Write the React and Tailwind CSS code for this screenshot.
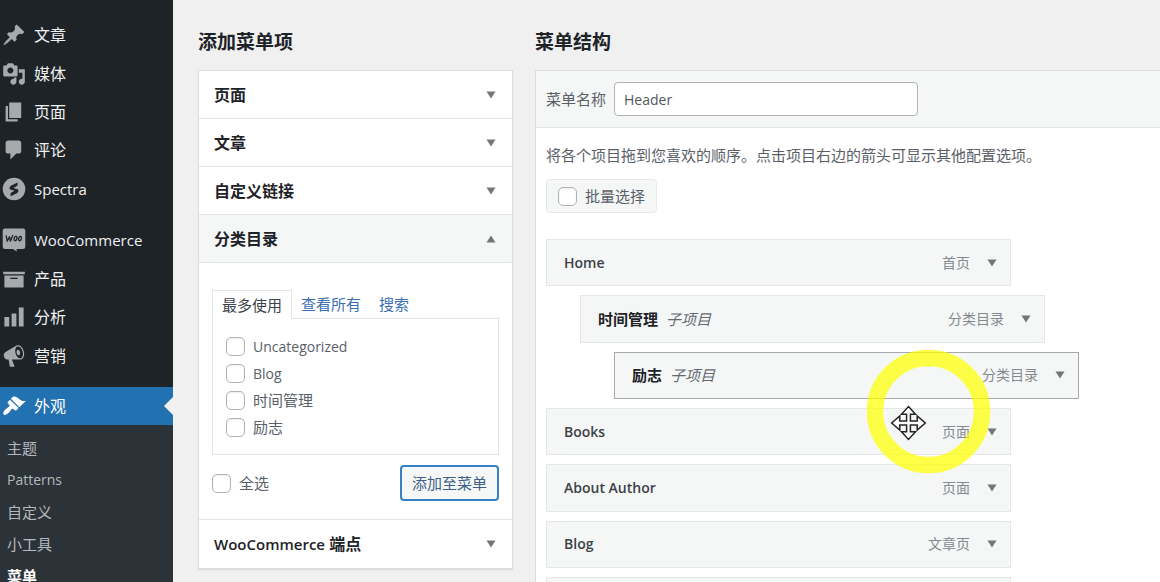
const FONT = "font-['Open_Sans','Noto_Sans_CJK_SC',sans-serif]";

const ICONS = {
  pin: "M10.44 3.02l1.82-1.82 6.36 6.35-1.83 1.82c-1.05-.68-2.48-.57-3.41.36l-.75.75c-.92.93-1.04 2.35-.35 3.41l-1.83 1.82-2.41-2.41-2.8 2.79c-.42.42-3.38 2.71-3.8 2.29s1.86-3.39 2.28-3.81l2.79-2.79L4.1 9.36l1.83-1.82c1.05.69 2.48.57 3.4-.36l.75-.75c.93-.92 1.05-2.35.36-3.41z",
  media: "M13 11V4c0-.55-.45-1-1-1h-1.67L9 1H5L3.67 3H2c-.55 0-1 .45-1 1v7c0 .55.45 1 1 1h10c.55 0 1-.45 1-1zM7 4.5c1.38 0 2.5 1.12 2.5 2.5S8.38 9.5 7 9.5 4.5 8.38 4.5 7 5.62 4.5 7 4.5zM14 6h5v10.5c0 1.38-1.12 2.5-2.5 2.5S14 17.88 14 16.5s1.12-2.5 2.5-2.5c.17 0 .34.02.5.05V9h-3V6zm-4 8.05V13h2v3.5c0 1.38-1.12 2.5-2.5 2.5S7 17.88 7 16.5 8.12 14 9.5 14c.17 0 .34.02.5.05z",
  page: "M6 15V2h10v13H6zm-1 1h8v2H3V5h2v11z",
  comment: "M5 2h9c1.1 0 2 .9 2 2v7c0 1.1-.9 2-2 2h-2l-5 5v-5H5c-1.1 0-2-.9-2-2V4c0-1.1.9-2 2-2z",
  archive: "M19 4v2H1V4h18zM2 7h16v10H2V7zm11 3V9H7v1h6z",
  chart: "M18 18V2h-4v16h4zm-6 0V7H8v11h4zm-6 0v-8H2v8h4z",
  megaphone: "M18.15 5.94c.46 1.62.38 3.22-.02 4.48-.42 1.28-1.26 2.18-2.3 2.48-.16.06-.26.06-.4.06-.06.02-.12.02-.18.02-.06.02-.14.02-.22.02h-6.8l2.22 5.5c.02.14-.06.26-.14.34-.08.1-.24.16-.34.16H6.95c-.1 0-.26-.06-.34-.16-.08-.08-.16-.2-.14-.34l-1-5.5H4.25l-.02-.02c-.5.06-1.08-.18-1.54-.62s-.88-1.08-1.06-1.88c-.24-.8-.2-1.56-.02-2.2.18-.62.58-1.08 1.06-1.3l.02-.02 9-5.4c.1-.06.18-.1.24-.16.06-.04.14-.08.24-.12.16-.08.28-.12.5-.18 1.04-.3 2.24.1 3.22.98s1.84 2.24 2.26 3.86zm-2.58 5.98h-.02c.4-.1.74-.34 1.04-.7.58-.7.86-1.76.86-3.04 0-.64-.1-1.3-.28-1.98-.34-1.36-1.02-2.5-1.78-3.24s-1.68-1.1-2.46-.88c-.82.22-1.4.96-1.7 2-.32 1.04-.28 2.36.06 3.72.38 1.36 1 2.5 1.8 3.24.78.74 1.62 1.1 2.48.88zm-2.54-7.08c.22-.04.42-.02.62.04.38.16.76.48 1.02 1s.42 1.2.42 1.78c0 .3-.04.56-.12.8-.18.48-.44.84-.86.94-.34.1-.8-.06-1.14-.4s-.64-.86-.78-1.5c-.18-.62-.12-1.24.02-1.72s.48-.84.82-.94z",
  brush: "M14.48 11.06L7.41 3.99l1.5-1.5c.5-.56 2.3-.47 3.51.32 1.21.8 1.43 1.28 2.91 2.1 1.18.64 2.45 1.26 4.45.85zm-.71.71L6.7 4.7 4.93 6.47c-.39.39-.39 1.02 0 1.41l1.06 1.06c.39.39.39 1.03 0 1.42-.6.6-1.43 1.11-2.21 1.69-.35.26-.7.53-1.01.84C1.43 14.23.4 16.08 1.4 17.07c.99 1 2.84-.03 4.18-1.36.31-.31.58-.66.85-1.02.57-.78 1.08-1.61 1.69-2.21.39-.39 1.02-.39 1.41 0l1.06 1.06c.39.39 1.02.39 1.41 0z",
};

function Icon({ name }) {
  if (name === "spectra") {
    return (
      <svg viewBox="0 0 24 24" className="size-6 shrink-0" aria-hidden="true">
        <circle cx="12" cy="12" r="11.3" fill="#a7aaad" />
        <path d="M15.6 5.4v3.2l-4.3 2.3 4.9 1.6c.4 1.6-.1 2.9-1.3 3.7L8.6 19.2v-3.2l4-2.2-4.8-1.5c-.5-1.5 0-2.9 1.2-3.6z" fill="#1d2327" />
      </svg>
    );
  }
  if (name === "woo") {
    return (
      <svg viewBox="0 0 24 24" className="size-6 shrink-0" aria-hidden="true">
        <path d="M3 .5h18a2.3 2.3 0 0 1 2.3 2.3v16a2.3 2.3 0 0 1-2.3 2.3h-6.500l.4 2.300-3.900-2.300H3A2.300 2.300 0 0 1 .7 18.800v-16A2.300 2.300 0 0 1 3 .5z" fill="#a7aaad" />
        <g fill="none" stroke="#1d2327" strokeWidth="1.300" strokeLinejoin="round" strokeLinecap="round">
          <path d="M4.200 7.800l1 5.400 2.300-4.400.9 4.400L10.700 7.600" />
          <ellipse cx="13.500" cy="10.600" rx="1.300" ry="2.200" transform="rotate(16 13.500 10.600)" />
          <ellipse cx="18" cy="10.600" rx="1.300" ry="2.200" transform="rotate(16 18 10.600)" />
        </g>
      </svg>
    );
  }
  return (
    <svg viewBox="0 0 20 20" className="size-6 shrink-0" fill="currentColor" aria-hidden="true">
      <path d={ICONS[name]} />
    </svg>
  );
}

function NavGroup({ items, className }) {
  return (
    <ul className={`flex flex-col ${className}`}>
      {items.map(([icon, label]) => (
        <li key={label} className="flex flex-1">
          <a href="#" className="flex flex-1 items-center gap-2 pl-[2px] text-[#a7aaad]">
            <Icon name={icon} />
            <span className={`text-[#f0f0f1] ${/^[A-Z]/.test(label) ? "text-[15px]" : ""}`}>{label}</span>
          </a>
        </li>
      ))}
    </ul>
  );
}

function Sidebar() {
  return (
    <nav className="w-[173px] shrink-0 bg-[#1d2327] pt-4 text-base leading-5">
      <NavGroup
        className="h-[192px]"
        items={[["pin", "文章"], ["media", "媒体"], ["page", "页面"], ["comment", "评论"], ["spectra", "Spectra"]]}
      />
      <NavGroup
        className="mt-[13px] h-[154px]"
        items={[["woo", "WooCommerce"], ["archive", "产品"], ["chart", "分析"], ["megaphone", "营销"]]}
      />
      <a href="#" className="relative mt-3 flex h-[38px] items-center gap-2 bg-[#2271b1] pl-[2px] text-white">
        <Icon name="brush" />
        外观
        <span className="absolute top-[10px] right-0 border-y-[9px] border-r-[9px] border-y-transparent border-r-[#f0f0f1]" />
      </a>
      <ul className="bg-[#2c3338] py-[7px] text-[15px] text-[#b4b9be]">
        {["主题", "Patterns", "自定义", "小工具"].map((t) => (
          <li key={t}>
            <a href="#" className={`flex h-8 items-center pl-[7px] ${t === "Patterns" ? "text-sm" : ""}`}>{t}</a>
          </li>
        ))}
        <li>
          <a href="#" className="flex h-8 items-center pl-[7px] font-bold text-white">菜单</a>
        </li>
      </ul>
    </nav>
  );
}

function Triangle({ up }) {
  return (
    <svg viewBox="0 0 10 8" className="h-2 w-[10px] shrink-0" fill="#72777c" aria-hidden="true">
      <path d={up ? "M5 .5L9.5 7.5h-9z" : "M5 7.5L.5 .5h9z"} />
    </svg>
  );
}

function Check({ label, small, className = "" }) {
  return (
    <label className={`flex items-center gap-2 ${className}`}>
      <input
        type="checkbox"
        className="size-[19px] shrink-0 appearance-none rounded-[5px] border border-[#b0b3b6] bg-white shadow-[inset_0_1px_2px_rgba(0,0,0,0.08)]"
      />
      <span className={small ? "text-sm" : ""}>{label}</span>
    </label>
  );
}

function Section({ title, open }) {
  return (
    <button
      type="button"
      aria-expanded={!!open}
      className={`flex h-12 w-full items-center justify-between pr-4 pl-[15px] text-left text-base font-semibold text-[#1d2327] ${open ? "bg-[#f5f7f7]" : ""}`}
    >
      <span>{title}</span>
      <Triangle up={open} />
    </button>
  );
}

function AddItems() {
  return (
    <section className="w-[315px] shrink-0">
      <h2 className="text-[19px] leading-7 font-semibold text-[#1d2327]">添加菜单项</h2>
      <div className="mt-[14px] divide-y divide-[#e2e4e5] border border-[#dcdddf] bg-white shadow-[0_1px_1px_rgba(0,0,0,0.08)]">
        <Section title="页面" />
        <Section title="文章" />
        <Section title="自定义链接" />
        <Section title="分类目录" open />
        <div className="px-[13px] pt-[27px] pb-[18px]">
          <div className="flex leading-[27px]">
            <button type="button" className="relative z-10 -mb-px border border-b-0 border-[#e3e4e5] bg-white px-[9px] text-[#3c434a]">
              最多使用
            </button>
            <a href="#" className="pt-px pl-[9px] text-[#3a6fb0]">查看所有</a>
            <a href="#" className="pt-px pl-[18px] text-[#3a6fb0]">搜索</a>
          </div>
          <div className="flex flex-col border border-[#e3e4e5] px-[13px] pt-[14px] pb-[14px]">
            <Check className="h-[27px]" small label="Uncategorized" />
            <Check className="h-[27px]" small label="Blog" />
            <Check className="h-[27px]" label="时间管理" />
            <Check className="h-[26px]" label="励志" />
          </div>
          <div className="mt-[10px] flex items-center justify-between">
            <Check label="全选" />
            <button
              type="button"
              className="h-9 rounded-[4px] border-2 border-[#3582c4] bg-[#f6f7f7] px-[10px] text-[#3d5f88]"
            >
              添加至菜单
            </button>
          </div>
        </div>
        <Section title={<><span className="text-[15px]">WooCommerce</span> 端点</>} />
      </div>
    </section>
  );
}

const MENU = [
  { title: "Home", type: "首页" },
  { title: "时间管理", type: "分类目录", depth: 1 },
  { title: "励志", type: "分类目录", depth: 2, active: true },
  { title: "Books", type: "页面" },
  { title: "About Author", type: "页面" },
  { title: "Blog", type: "文章页" },
];
const INDENT = ["", "ml-[34px]", "ml-[68px]"];

function MenuItem({ title, type, depth = 0, active }) {
  return (
    <li className="pb-[9px]">
      <div
        className={`flex h-full w-[465px] items-center border bg-[#f5f7f7] pr-[13px] pl-[17px] ${INDENT[depth]} ${active ? "border-[#a7aaad]" : "border-[#e4e6e7]"}`}
      >
        <span className={depth ? "font-bold text-[#1d2327]" : "text-sm font-semibold text-[#3c4146]"}>{title}</span>
        {depth > 0 && <span className="ml-2 text-[#646970] italic">子项目</span>}
        <span className="ml-auto text-sm text-[#84888d]">{type}</span>
        <button type="button" aria-label={`编辑 ${title}`} className="ml-[17px] flex">
          <Triangle />
        </button>
      </div>
    </li>
  );
}

function Structure() {
  return (
    <section className="min-w-0 flex-1">
      <h2 className="text-[19px] leading-7 font-semibold text-[#1d2327]">菜单结构</h2>
      <div className="mt-[14px] border border-r-0 border-[#dcdddf] bg-white">
        <div className="flex items-center gap-2 border-b border-[#e2e4e5] bg-[#f5f7f7] px-[10px] py-[11px]">
          <label htmlFor="menu-name">菜单名称</label>
          <input
            id="menu-name"
            defaultValue="Header"
            className="h-[34px] w-[304px] rounded-[4px] border border-[#b0b3b6] bg-white px-[9px] text-sm text-[#50575e]"
          />
        </div>
        <div className="px-[10px] pt-[15px]">
          <p className="leading-6">将各个项目拖到您喜欢的顺序。点击项目右边的箭头可显示其他配置选项。</p>
          <Check
            className="mt-3 h-[34px] w-fit rounded-[4px] border border-[#e4e6e7] bg-[#f5f7f7] px-[11px]"
            label="批量选择"
          />
          <ul className="mt-[26px] grid h-[338px] grid-rows-6">
            {MENU.map((m) => (
              <MenuItem key={m.title} {...m} />
            ))}
          </ul>
          <div className="h-[47px] w-[465px] border border-[#e4e6e7] bg-[#f5f7f7]" />
        </div>
      </div>
    </section>
  );
}

function Pointer() {
  return (
    <svg viewBox="0 0 124 124" className="pointer-events-none absolute top-[350px] left-[867px] size-[124px]" aria-hidden="true">
      <circle cx="61.5" cy="61.5" r="53.5" fill="none" stroke="#ffff00" strokeOpacity="0.72" strokeWidth="16.5" />
      <path
        d="M41.5 56.500L48.500 64.300H43.400V71.100H50.200V66L58.300 73L50.200 80V74.900H43.400V81.700H48.500L41.500 89.500L34.500 81.700H39.600V74.900H32.800V80L24.700 73L32.800 66V71.100H39.600V64.300H34.500Z"
        fill="#fff" stroke="#26262a" strokeWidth="1.500"
      />
    </svg>
  );
}

export default function App() {
  return (
    <div className={`relative flex h-screen overflow-hidden bg-[#f0f0f1] text-[15px] text-[#5a6067] ${FONT}`}>
      <Sidebar />
      <main className="flex min-w-0 flex-1 gap-[22px] pt-7 pl-[25px]">
        <AddItems />
        <Structure />
      </main>
      <Pointer />
    </div>
  );
}
